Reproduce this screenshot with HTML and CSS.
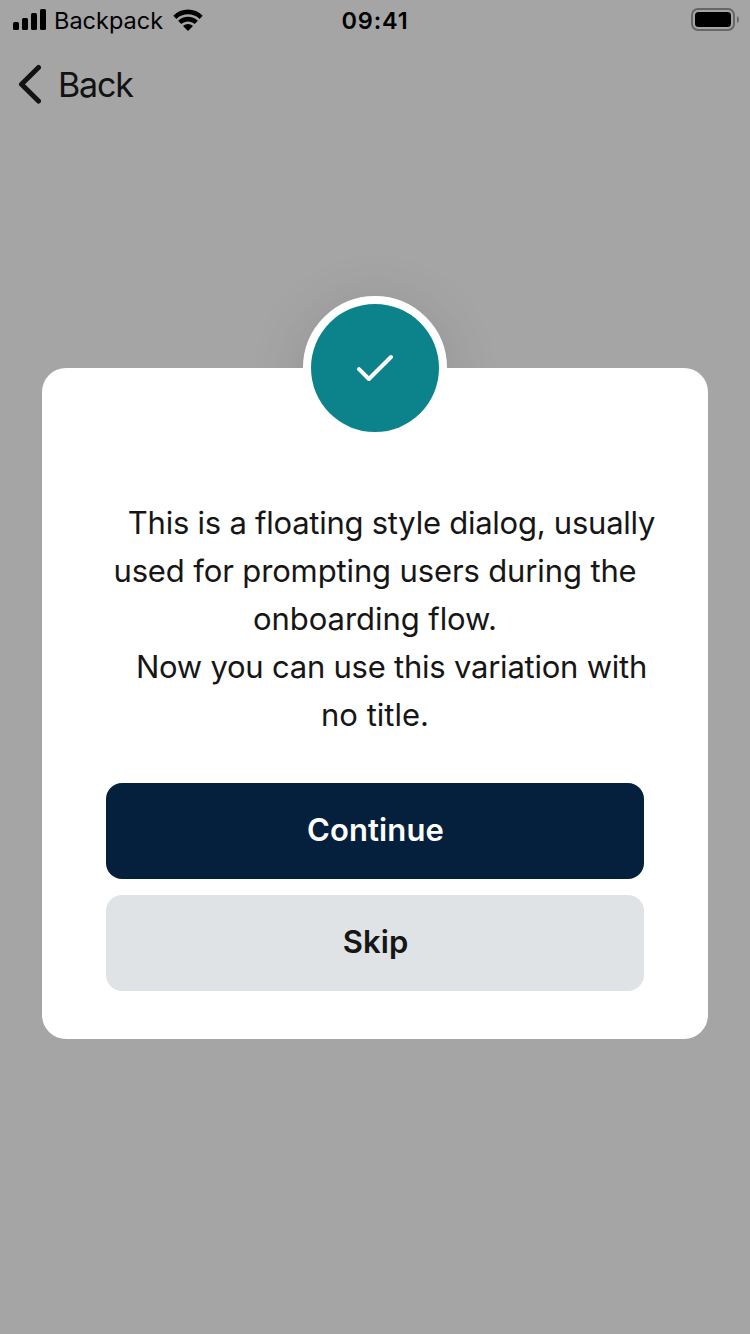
FILE: index.html
```
<!DOCTYPE html>
<html lang="en">
<head>
<meta charset="utf-8">
<title>Dialog</title>
<link rel="stylesheet" href="styles.css">
</head>
<body>
<div class="screen">
  <header class="status">
    <div class="status-left">
      <svg class="signal" width="34" height="22" viewBox="0 0 34 22"><rect x="0" y="13" width="6" height="8" rx="1.5"/><rect x="9" y="9" width="6" height="12" rx="1.5"/><rect x="18" y="4" width="6" height="17" rx="1.5"/><rect x="27" y="0" width="6" height="21" rx="1.5"/></svg>
      <span class="carrier">Backpack</span>
      <svg class="wifi" width="30" height="22" viewBox="0 0 30 22"><path d="M0.3 6.7C8.2-1.6 21.8-1.6 29.7 6.7L26.6 10C20.5 3.8 9.5 3.8 3.4 10Z"/><path d="M5.1 11.8C10.5 6.4 19.5 6.4 24.9 11.8L21.7 15.1C18.2 11.6 11.8 11.6 8.3 15.1Z"/><path d="M10 16.9C12.8 14.2 17.2 14.2 20 16.9L15 22Z"/></svg>
    </div>
    <span class="time">09:41</span>
    <svg class="battery" width="48" height="24" viewBox="0 0 48 24"><rect x="1" y="1" width="42" height="21" rx="6" fill="none" stroke="#666" stroke-width="2"/><rect x="4" y="4" width="36" height="15" rx="3.5"/><path d="M46 8Q48 9 48 11.5T46 15Z" fill="#666"/></svg>
  </header>
  <nav class="nav">
    <svg width="24" height="40" viewBox="0 0 24 40"><path d="M20.5 3.5L3.5 20.2L20.5 37" fill="none" stroke="#111213" stroke-width="5" stroke-linecap="round" stroke-linejoin="round"/></svg>
    <span class="back">Back</span>
  </nav>
  <main class="dialog">
    <div class="halo"></div>
    <div class="card">
      <div class="message">
        <div class="line indent l1">This is a floating style dialog, usually</div>
        <div class="line l2">used for prompting users during the</div>
        <div class="line l3">onboarding flow.</div>
        <div class="line indent l4">Now you can use this variation with</div>
        <div class="line l5">no title.</div>
      </div>
      <div class="actions">
        <button class="button primary">Continue</button>
        <button class="button secondary">Skip</button>
      </div>
    </div>
    <div class="badge">
      <svg width="48" height="48" viewBox="0 0 48 48"><path d="M8 25.2L17.9 35L40 13" fill="none" stroke="#fff" stroke-width="4" stroke-linecap="round" stroke-linejoin="round"/></svg>
    </div>
  </main>
</div>
</body>
</html>
```
FILE: styles.css
```
body { margin: 0; font-family: Inter, "Liberation Sans", sans-serif; color: #161616; }
.screen { width: 750px; height: 1334px; background: #a5a5a5; overflow: hidden; display: flex; flex-direction: column; }
svg { display: block; flex: none; }
.status { height: 40px; display: grid; grid-template-columns: 1fr auto 1fr; align-items: start; color: #000; box-sizing: border-box; padding: 0 11px 0 13px; }
.status-left { display: flex; align-items: flex-start; }
.signal { margin-top: 9px; }
.carrier { margin-left: 7px; width: 112px; font-size: 23.5px; line-height: 42px; letter-spacing: 0; }
.wifi { margin: 9px 0 0 7px; }
.time { font-size: 23.5px; font-weight: 600; line-height: 42px; letter-spacing: 0.8px; margin-left: -2px; }
.battery { margin-top: 8px; justify-self: end; }
.nav { height: 88px; display: flex; align-items: center; padding-left: 18px; color: #111213; }
.back { margin-left: 16px; font-size: 34px; letter-spacing: -1.2px; }
.dialog { position: relative; margin: 240px 42px 0; }
.card { position: relative; height: 671px; box-sizing: border-box; padding: 131px 64px 48px; background: #fff; border-radius: 24px; display: flex; flex-direction: column; justify-content: space-between; }
.halo, .badge { position: absolute; left: 261px; top: -72px; width: 144px; height: 144px; box-sizing: border-box; border-radius: 50%; }
.halo { box-shadow: 0 8px 60px rgba(0, 0, 0, 0.12); }
.badge { border: 8px solid #fff; background: #fff; display: flex; align-items: center; justify-content: center; }
.badge::before { content: ""; position: absolute; inset: 0; border-radius: 50%; background: #0c838a; }
.badge svg { position: relative; }
.message { margin: 0 -24px; text-align: center; font-size: 31px; line-height: 48px; }
.line { white-space: nowrap; }
.indent { padding-left: 33px; }
.l1 { letter-spacing: -0.25px; }
.l2 { letter-spacing: -0.13px; }
.l3 { letter-spacing: -0.06px; }
.l4 { letter-spacing: -0.23px; }
.actions { display: flex; flex-direction: column; gap: 16px; }
.button { height: 96px; border: 0; border-radius: 16px; padding: 0 0 4px 1px; font: 600 31px/1 Inter, "Liberation Sans", sans-serif; letter-spacing: 0.1px; }
.primary { background: #05203c; color: #fff; }
.secondary { background: #e0e3e5; color: #161616; }
```
